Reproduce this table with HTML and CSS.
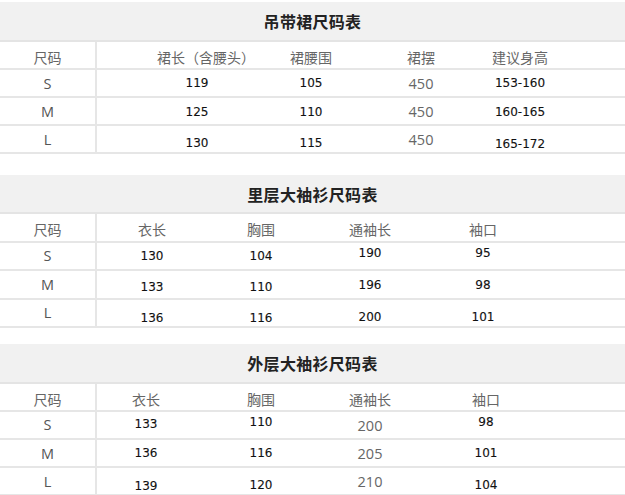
FILE: index.html
```html
<!DOCTYPE html>
<html lang="zh-CN">
<head>
<meta charset="utf-8">
<title>尺码表</title>
<link rel="stylesheet" href="styles.css">
</head>
<body>
<section class="chart chart-a">
  <h2 class="band">吊带裙尺码表</h2>
  <div class="row head">
    <span class="c c0">尺码</span>
    <span class="c c1 shift-r">裙长（含腰头）</span>
    <span class="c c2">裙腰围</span>
    <span class="c c3">裙摆</span>
    <span class="c c4">建议身高</span>
  </div>
  <div class="row">
    <span class="c c0 sz">S</span>
    <span class="c c1 num shift-l">119</span>
    <span class="c c2 num">105</span>
    <span class="c c3 lite">450</span>
    <span class="c c4 num">153-160</span>
  </div>
  <div class="row">
    <span class="c c0 sz">M</span>
    <span class="c c1 num shift-l dn1">125</span>
    <span class="c c2 num dn1">110</span>
    <span class="c c3 lite">450</span>
    <span class="c c4 num dn1">160-165</span>
  </div>
  <div class="row">
    <span class="c c0 sz">L</span>
    <span class="c c1 num shift-l dn4">130</span>
    <span class="c c2 num dn4">115</span>
    <span class="c c3 lite">450</span>
    <span class="c c4 num dn5">165-172</span>
  </div>
</section>

<section class="chart chart-b">
  <h2 class="band">里层大袖衫尺码表</h2>
  <div class="row head">
    <span class="c c0">尺码</span>
    <span class="c c1">衣长</span>
    <span class="c c2">胸围</span>
    <span class="c c3">通袖长</span>
    <span class="c c4">袖口</span>
  </div>
  <div class="row">
    <span class="c c0 sz">S</span>
    <span class="c c1 num">130</span>
    <span class="c c2 num">104</span>
    <span class="c c3 num up3">190</span>
    <span class="c c4 num up3">95</span>
  </div>
  <div class="row">
    <span class="c c0 sz">M</span>
    <span class="c c1 num dn3">133</span>
    <span class="c c2 num dn3">110</span>
    <span class="c c3 num dn1">196</span>
    <span class="c c4 num dn1">98</span>
  </div>
  <div class="row">
    <span class="c c0 sz">L</span>
    <span class="c c1 num dn5">136</span>
    <span class="c c2 num dn5">116</span>
    <span class="c c3 num dn4">200</span>
    <span class="c c4 num dn4">101</span>
  </div>
</section>

<section class="chart chart-c">
  <h2 class="band">外层大袖衫尺码表</h2>
  <div class="row head">
    <span class="c c0">尺码</span>
    <span class="c c1">衣长</span>
    <span class="c c2">胸围</span>
    <span class="c c3">通袖长</span>
    <span class="c c4">袖口</span>
  </div>
  <div class="row">
    <span class="c c0 sz up1">S</span>
    <span class="c c1 num up1">133</span>
    <span class="c c2 num up3">110</span>
    <span class="c c3 lite">200</span>
    <span class="c c4 num up3">98</span>
  </div>
  <div class="row">
    <span class="c c0 sz">M</span>
    <span class="c c1 num">136</span>
    <span class="c c2 num">116</span>
    <span class="c c3 lite">205</span>
    <span class="c c4 num">101</span>
  </div>
  <div class="row">
    <span class="c c0 sz">L</span>
    <span class="c c1 num dn5">139</span>
    <span class="c c2 num dn4">120</span>
    <span class="c c3 lite">210</span>
    <span class="c c4 num dn4">104</span>
  </div>
</section>
</body>
</html>
```

FILE: styles.css
```css
* {
  box-sizing: border-box;
  margin: 0;
  padding: 0;
}

html, body {
  background: #ffffff;
}

body {
  width: 625px;
  padding-top: 2px;
  font-family: "Open Sans", "Noto Sans CJK SC", sans-serif;
  color: #222;
  overflow: hidden;
}

.chart-b {
  margin-top: 21px;
}

.chart-c {
  margin-top: 16px;
}

.band {
  height: 40px;
  background: #f1f1f1;
  border-bottom: 2px solid #e4e4e4;
  display: flex;
  align-items: center;
  justify-content: center;
  font-family: "Noto Sans CJK SC", sans-serif;
  font-weight: 700;
  font-size: 16px;
  color: #222;
  letter-spacing: 0.3px;
}

.chart-b .band {
  height: 39px;
}

.row {
  display: grid;
  height: 28px;
  border-bottom: 2px solid #e6e6e6;
}

.chart-b .row {
  height: 28.5px;
}

.chart-a .row {
  grid-template-columns: 97px 48px 110px 6px 100px 10px 100px 4px 90px 1fr;
}

.chart-b .row {
  grid-template-columns: 97px 10px 90px 14px 100px 9px 100px 13px 100px 1fr;
}

.chart-c .row {
  grid-template-columns: 97px 4px 90px 20px 100px 9px 100px 16px 100px 1fr;
}

.c {
  display: flex;
  align-items: center;
  justify-content: center;
  height: 100%;
  white-space: nowrap;
}

.c0 { grid-column: 1; border-right: 2px solid #e6e6e6; }
.c1 { grid-column: 3; }
.c2 { grid-column: 5; }
.c3 { grid-column: 7; }
.c4 { grid-column: 9; }

.head .c {
  font-family: "Noto Sans CJK SC", sans-serif;
  font-size: 14px;
  color: #666;
  padding-top: 4px;
}

.sz {
  font-size: 14.5px;
  color: #555;
}

.num {
  font-family: "DejaVu Sans", sans-serif;
  font-size: 12px;
  color: #111;
  -webkit-text-stroke: 0.12px #111;
}

.lite {
  font-size: 14.5px;
  color: #666;
}

.shift-r { padding-left: 12px; }
.shift-l { padding-right: 6px; }

.dn1 { padding-top: 2px; }
.dn3 { padding-top: 6px; }
.dn4 { padding-top: 8px; }
.dn5 { padding-top: 10px; }
.up1 { padding-bottom: 2px; }
.up3 { padding-bottom: 6px; }
```
